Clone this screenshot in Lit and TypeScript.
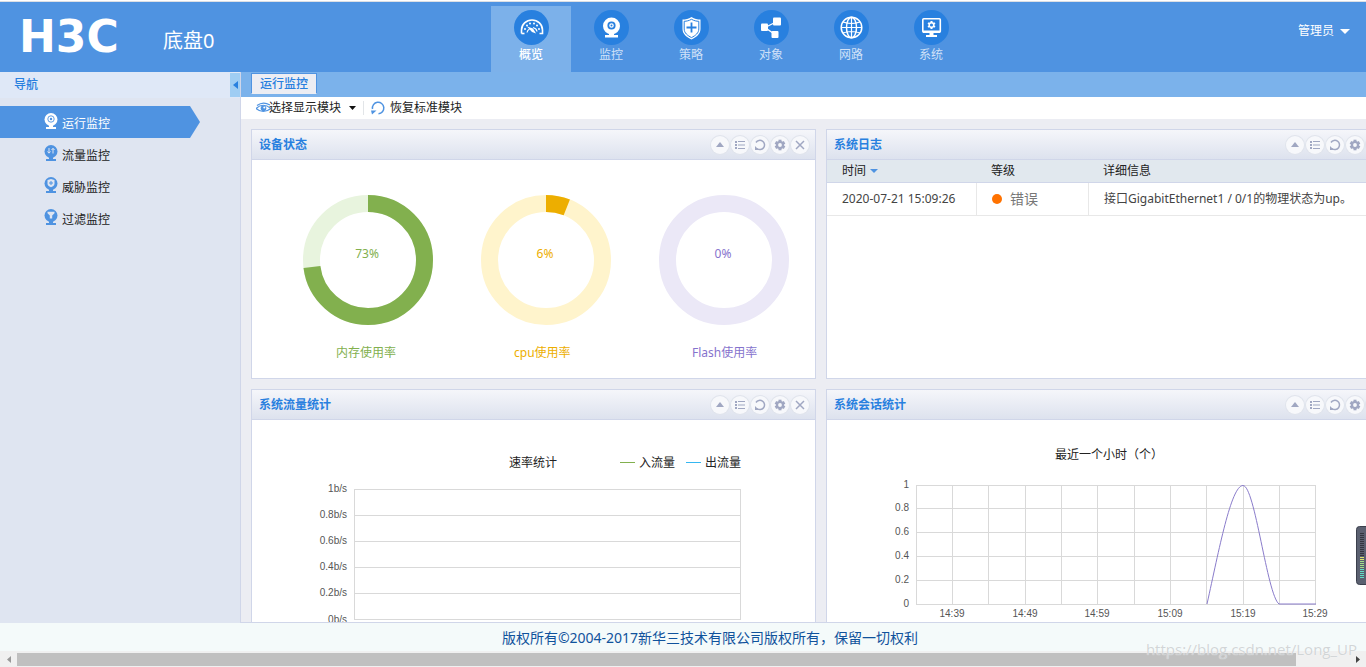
import { LitElement, html, svg, css } from "lit";
import { customElement, property, state } from "lit/decorators.js";
import { classMap } from "lit/directives/class-map.js";

const gearTeeth = (cx: number, cy: number, r: number, w: number, h: number) =>
  [0, 60, 120, 180, 240, 300].map(
    (a) => svg`<rect x=${cx - w / 2} y=${cy - r} width=${w} height=${h} fill="currentColor" transform="rotate(${a} ${cx} ${cy})"/>`
  );

const navIcons: Record<string, unknown> = {
  gauge: svg`<path d="M7.500 23.500V20a10.500 10 0 0 1 21 0v3.500h-3" fill="none" stroke="#fff" stroke-width="1.600"/>
    <path d="M7.500 23.500h3" stroke="#fff" stroke-width="1.600"/>
    <g fill="#fff"><circle cx="11" cy="19" r="1"/><circle cx="13" cy="15.500" r="1"/><circle cx="16" cy="13.500" r="1"/><circle cx="20" cy="13.500" r="1"/><circle cx="23" cy="15.500" r="1"/><circle cx="25" cy="19" r="1"/></g>
    <path d="M13 16.500l6 2 3 5-4-1.500z" fill="#fff"/><path d="M13 22.500a5.500 5 0 0 1 2.500-3.500M19 17.500a5.500 5 0 0 1 4 4" fill="none" stroke="#fff" stroke-width="1.200"/>`,
  camera: svg`<circle cx="17.500" cy="16" r="8.500" fill="#fff"/><circle cx="17.500" cy="15.500" r="3.200" fill="none" stroke="#2880df" stroke-width="1.800"/><circle cx="17.500" cy="15.500" r="1" fill="#2880df"/><path d="M15 23h5v2h4v2.500H11V25h4z" fill="#fff"/>`,
  shield: svg`<path d="M17.500 7c3 2 6 2.500 9 2.500V19c0 5-4 8-9 10.500C12.500 27 8.500 24 8.500 19V9.500c3 0 6-.5 9-2.500z" fill="#fff"/>
    <path d="M17.500 9.300c2.500 1.400 5 2 7.300 2V19c0 4-3.300 6.500-7.300 8.600-4-2.100-7.300-4.600-7.300-8.600v-7.700c2.300 0 4.800-.6 7.300-2z" fill="none" stroke="#2880df"/>
    <path d="M17.500 12.500v10M12.500 17.500h10" stroke="#2880df" stroke-width="1.800"/>`,
  share: svg`<rect x="7" y="13.500" width="7" height="7.500" rx="1" fill="#fff"/><rect x="19" y="7.500" width="8" height="8" rx="1" fill="#fff"/><rect x="17.500" y="21" width="7" height="7" rx="1" fill="#fff"/><path d="M23 11.500L11 17.500l10 7" fill="none" stroke="#fff" stroke-width="1.300"/>`,
  globe: svg`<g fill="none" stroke="#fff" stroke-width="1.500"><circle cx="17.500" cy="17.500" r="10.300"/><ellipse cx="17.500" cy="17.500" rx="5" ry="10.300"/><path d="M7 17.500h21M9 12q8.500 3 17 0M9 23q8.500-3 17 0M17.500 7v21" stroke-width="1.200"/></g>`,
  screen: svg`<rect x="8.800" y="8.800" width="17.500" height="13.500" rx="1" fill="none" stroke="#fff" stroke-width="1.600"/><path d="M9 20.500h17V23H9z" fill="#fff"/><path d="M15.500 23h4v2h-4zM12 25h11v2H12z" fill="#fff"/>
    <g color="#fff">${gearTeeth(17.5, 15, 4, 2, 2)}<circle cx="17.500" cy="15" r="2.300" fill="none" stroke="#fff" stroke-width="1.500"/></g>`,
};

const sideGlyphs: Record<string, (c: string) => unknown> = {
  run: (c) => svg`<circle cx="7" cy="7" r="3.200" fill="none" stroke=${c} stroke-width=".9"/><circle cx="7" cy="7" r="1.200" fill=${c}/>`,
  flow: (c) => svg`<path d="M5 4v5M3.500 7.500L5 9.200l1.500-1.700M9 9.500V4.500M7.500 6L9 4.300 10.500 6" fill="none" stroke=${c}/>`,
  threat: (c) => svg`<path d="M7 3l3.500 1v3.500q0 2.500-3.500 3.800-3.500-1.300-3.500-3.800V4z" fill=${c}/><path d="M7 5v4M5 7h4" stroke="#4f93e1"/>`,
  filter: (c) => svg`<path d="M3.500 3.800h7v1.400L8.200 7.400v3H5.800v-3L3.500 5.200z" fill=${c}/>`,
};

const toolIcons = [
  { label: "折叠", icon: svg`<path d="M5 11l4-5 4 5z" fill="currentColor"/>` },
  { label: "列表", icon: svg`<path d="M4 5h2v2H4zM4 8h2v2H4zM4 11h2v2H4zM7 5h7v1H7zM7 8.500h7v1H7zM7 12h7v1H7z" fill="currentColor"/>` },
  { label: "刷新", icon: svg`<path d="M5 6.500A4.600 4.600 0 1 1 6 12.500" fill="none" stroke="currentColor" stroke-width="1.500"/><path d="M4 10v4h4z" fill="currentColor"/>` },
  { label: "设置", icon: svg`${gearTeeth(9, 9, 5.3, 3, 2.5)}<circle cx="9" cy="9" r="3" fill="none" stroke="currentColor" stroke-width="2.200"/>` },
  { label: "关闭", icon: svg`<path d="M5 5l8 8M13 5l-8 8" stroke="currentColor" stroke-width="1.500"/>` },
];

@customElement("dash-panel")
export class DashPanel extends LitElement {
  @property() heading = "";

  static styles = css`
    :host { display: flex; flex-direction: column; box-sizing: border-box; height: 250px; border: 1px solid #d0d6e9; background: #fff; min-width: 0; }
    .head { display: flex; align-items: center; justify-content: space-between; height: 29px; flex: none; padding: 0 6px 0 7px; border-bottom: 1px solid #d0d6e9; background: linear-gradient(#f5f6fa, #dde2ee); }
    h2 { margin: 0; font-size: 12px; line-height: 18px; font-weight: bold; color: #2880df; }
    .tools { display: flex; gap: 2px; }
    button { display: block; width: 18px; height: 18px; padding: 0; border: 0; border-radius: 50%; background: #f7f8fb; box-shadow: 0 0 0 1px #e0e4ec; color: #a0a7c2; cursor: pointer; }
    svg { display: block; }
    .body { flex: 1; min-height: 0; }
  `;

  render() {
    return html`
      <div class="head">
        <h2>${this.heading}</h2>
        <div class="tools">
          ${toolIcons.map((t) => html`<button type="button" aria-label=${t.label}><svg width="18" height="18" viewBox="0 0 18 18">${t.icon}</svg></button>`)}
        </div>
      </div>
      <div class="body"><slot></slot></div>
    `;
  }
}

@customElement("usage-ring")
export class UsageRing extends LitElement {
  @property({ type: Number }) value = 0;
  @property() label = "";
  @property() color = "";
  @property() track = "";

  static styles = css`
    :host { display: block; width: 130px; }
    svg { display: block; }
    text { font-size: 12px; text-anchor: middle; }
    .label { margin-top: 19px; padding-left: 33px; line-height: 18px; white-space: nowrap; }
  `;

  render() {
    return html`
      <svg width="130" height="130" viewBox="0 0 130 130">
        <circle cx="65" cy="65" r="56.5" fill="none" stroke=${this.track} stroke-width="17" />
        <circle cx="65" cy="65" r="56.5" fill="none" stroke=${this.color} stroke-width="17" pathLength="100" stroke-dasharray="${this.value} 100" transform="rotate(-90 65 65)" />
        <text x="64" y="63" fill=${this.color}>${this.value}%</text>
      </svg>
      <div class="label" style="color:${this.color}">${this.label}</div>
    `;
  }
}

@customElement("app-root")
export class AppRoot extends LitElement {
  @state() private activeNav = 0;
  @state() private activeSide = 0;

  private nav = [
    { icon: "gauge", label: "概览" },
    { icon: "camera", label: "监控" },
    { icon: "shield", label: "策略" },
    { icon: "share", label: "对象" },
    { icon: "globe", label: "网路" },
    { icon: "screen", label: "系统" },
  ];

  private side = [
    { icon: "run", label: "运行监控" },
    { icon: "flow", label: "流量监控" },
    { icon: "threat", label: "威胁监控" },
    { icon: "filter", label: "过滤监控" },
  ];

  static styles = css`
    :host { display: flex; flex-direction: column; position: relative; height: 100vh; overflow: hidden; font: 12px/18px "Noto Sans", "Noto Sans CJK SC", sans-serif; color: #222; background: #fff; }
    * { box-sizing: border-box; }
    button { font: inherit; color: inherit; border: 0; background: none; padding: 0; cursor: pointer; }
    a { color: inherit; text-decoration: none; }
    svg { display: block; flex: none; }
    .viewport { flex: 1; min-height: 0; overflow: hidden; display: grid; grid-template: minmax(0, 1fr) / minmax(1420px, 1fr); }
    .page { min-width: 0; min-height: 0; display: flex; flex-direction: column; border-top: 1px solid #fff; }

    .top { display: flex; height: 71px; flex: none; border-top: 1px solid #dcdfe4; background: #4f93e1; color: #fff; }
    .brand { flex: 0 0 491px; display: flex; align-items: center; gap: 26px; padding-left: 19px; }
    .logo { flex: 0 0 118px; font: bold 44px/44px "DejaVu Sans", sans-serif; }
    .device { font-size: 20px; line-height: 28px; padding-top: 8px; }
    .nav { display: flex; padding-top: 4px; }
    .nav a { width: 80px; display: flex; flex-direction: column; align-items: center; gap: 1px; padding-top: 4px; color: #cfe1f8; }
    .nav a.on { background: #7cb1ea; color: #fff; font-weight: 500; }
    .account { margin: 20px 70px auto auto; display: flex; align-items: center; gap: 6px; }

    .middle { flex: 1; min-height: 0; display: flex; }
    .sidebar { flex: 0 0 241px; background: #dfe5f1; border-right: 1px solid #d0d6e9; }
    .side-head { display: flex; justify-content: space-between; align-items: center; height: 26px; padding-left: 14px; background: #dfe8f7; color: #2880df; }
    h1 { margin: 0; font-size: 12px; line-height: 18px; font-weight: 500; }
    .fold { width: 10px; height: 24px; background: #9fcdf3; display: grid; place-items: center; }
    .side-list { list-style: none; margin: 8px 0 0; padding: 0; }
    .side-list a { display: flex; align-items: center; gap: 4px; width: 200px; height: 32px; padding-left: 44px; }
    .side-list a.on { background: #4f93e1; color: #fff; clip-path: polygon(0 0, 190px 0, 100% 50%, 190px 100%, 0 100%); }
    .side-list svg { margin-bottom: 2px; }
    .side-list span { padding-top: 3px; }

    .main { flex: 1; min-width: 0; display: flex; flex-direction: column; background: #ecedf3; border-bottom: 1px solid #d0d6e9; }
    .tabs { display: flex; height: 25px; flex: none; padding: 1px 10px 3px; background: #7bb2eb; }
    .tab { border: 1px solid #4f93e1; border-bottom-color: #ecedf3; background: #ecedf3; color: #2880df; padding: 0 8px; line-height: 18px; font-weight: 500; }
    .toolbar { display: flex; align-items: center; height: 22px; flex: none; background: #fff; padding-left: 15px; }
    .toolbar button { display: flex; align-items: center; line-height: 14px; }
    .choose { gap: 8px; padding-right: 7px; }
    .choose .cap { display: flex; align-items: center; }
    .choose .cap svg { margin-right: -2px; }
    .restore { gap: 5px; border-left: 1px solid #e2e5e8; padding-left: 7px; }
    .board { flex: 1; min-height: 0; overflow: hidden; display: grid; grid-template-columns: 1fr 1fr; grid-auto-rows: 250px; gap: 10px; padding: 10px 29px 0 10px; }
    .rings { display: flex; gap: 48px; padding: 35px 0 0 51px; }

    table { width: 100%; border-collapse: separate; border-spacing: 0; table-layout: fixed; }
    th, td { text-align: left; font-weight: normal; padding: 0 0 0 15px; white-space: nowrap; }
    th { height: 23px; background: #e1e8ee; border-bottom: 1px solid #d0d6e9; }
    td { height: 33px; border-bottom: 1px solid #e8e8e8; color: #444; }
    td + td { border-left: 1px solid #e8e8e8; }
    .col-time { width: 149px; }
    .col-level { width: 112px; }
    .sort { display: flex; align-items: center; gap: 4px; line-height: 18px; }
    .level { display: flex; align-items: center; gap: 8px; font-size: 14px; color: #777; }
    .dot { width: 10px; height: 10px; border-radius: 50%; background: #ff7200; }

    .chart text { font-size: 12px; fill: #222; }
    .chart .tick { font: 10px "Liberation Sans", sans-serif; fill: #555; }
    .end { text-anchor: end; }
    .mid { text-anchor: middle; }

    .copyright { flex: none; height: 28px; background: #f4fafa; color: #10529c; font-size: 14px; line-height: 30px; text-align: center; }
    .scroll { flex: none; display: flex; align-items: center; height: 16px; background: #f0f0f0; }
    .scroll button { width: 17px; height: 16px; display: grid; place-items: center; }
    .rail { flex: 1; height: 13px; display: flex; }
    .thumb { width: 96%; background: #c0c0c0; }
    .meter { position: absolute; right: 0; top: 526px; width: 10px; height: 59px; }
    .mark { position: absolute; right: 9px; bottom: 7px; font: 15px/22px "Open Sans", sans-serif; color: rgba(195, 200, 202, 0.75); text-shadow: 0 0 1px #fff; }
  `;

  private trafficChart() {
    const rows = ["1b/s", "0.8b/s", "0.6b/s", "0.4b/s", "0.2b/s", "0b/s"];
    return html`<svg class="chart" width="563" height="219" viewBox="0 0 563 219">
      <text x="257" y="47">速率统计</text>
      <path d="M368 42.500h15" stroke="#82b04e" /><text x="387" y="47">入流量</text>
      <path d="M434 42.500h15" stroke="#35b7f1" /><text x="453" y="47">出流量</text>
      <path d="M102.500 69v131M488.500 69v131" stroke="#d9d9d9" />
      ${rows.map((r, i) => svg`<path d="M102 ${69.5 + i * 26}h387" stroke="#d9d9d9"/><text class="tick end" x="95" y=${72 + i * 26 + (i === 5 ? 1 : 0)}>${r}</text>`)}
    </svg>`;
  }

  private sessionChart() {
    const rows = ["1", "0.8", "0.6", "0.4", "0.2", "0"];
    const xs = [89, 125, 161, 198, 234, 270, 307, 343, 379, 416, 452, 488];
    const times = ["14:39", "14:49", "14:59", "15:09", "15:19", "15:29"];
    return html`<svg class="chart" width="563" height="219" viewBox="0 0 563 219">
      <text x="228" y="39">最近一个小时（个）</text>
      ${xs.map((x) => svg`<path d="M${x + 0.5} 65v119" stroke="#d9d9d9"/>`)}
      ${rows.map((r, i) => {
        const y = [65, 88, 112, 136, 160, 184][i];
        return svg`<path d="M89 ${y + 0.5}h400" stroke="#d9d9d9"/><text class="tick end" x="82" y=${y + 3}>${r}</text>`;
      })}
      ${times.map((t, i) => svg`<text class="tick mid" x=${xs[i * 2 + 1]} y="197">${t}</text>`)}
      <path d="M380 184C392 130 404 65.500 416 65.500S440 175 452 184h37" fill="none" stroke="#8a7ccb" />
    </svg>`;
  }

  render() {
    return html`
      <div class="viewport"><div class="page">
        <header class="top">
          <div class="brand"><span class="logo">H3C</span><span class="device">底盘0</span></div>
          <nav class="nav">
            ${this.nav.map((n, i) => html`<a href="#" class=${classMap({ on: i === this.activeNav })} @click=${() => (this.activeNav = i)}>
              <svg width="35" height="35" viewBox="0 0 35 35"><circle cx="17.5" cy="17.5" r="17.5" fill="#2880df" />${navIcons[n.icon]}</svg>
              <span>${n.label}</span></a>`)}
          </nav>
          <button class="account" type="button">管理员<svg width="10" height="5" viewBox="0 0 10 5"><path d="M0 0h10L5 5z" fill="#fff" /></svg></button>
        </header>

        <div class="middle">
          <aside class="sidebar">
            <div class="side-head"><h1>导航</h1>
              <button class="fold" type="button" aria-label="收起"><svg width="5" height="8" viewBox="0 0 5 8"><path d="M5 0v8L0 4z" fill="#2880df" /></svg></button>
            </div>
            <ul class="side-list">
              ${this.side.map((s, i) => {
                const on = i === this.activeSide;
                return html`<li><a href="#" class=${classMap({ on })} @click=${() => (this.activeSide = i)}>
                  <svg width="14" height="18" viewBox="0 0 14 18"><circle cx="7" cy="7.5" r="6.5" fill=${on ? "#fff" : "#4f93e1"} /><path d="M5 13h4v2h3v2H2v-2h3z" fill=${on ? "#fff" : "#4f93e1"} />${sideGlyphs[s.icon](on ? "#4f93e1" : "#dfe5f1")}</svg>
                  <span>${s.label}</span></a></li>`;
              })}
            </ul>
          </aside>

          <main class="main">
            <div class="tabs"><button class="tab" type="button">运行监控</button></div>
            <div class="toolbar">
              <button class="choose" type="button">
                <span class="cap"><svg width="15" height="12" viewBox="0 0 15 12"><path d="M0 6.500q7-6.500 15 0-8 6-15 0M1 3.500q6-4.500 13-.5" fill="none" stroke="#4f93e1" stroke-width="1.200" /><circle cx="7.500" cy="6.300" r="2.800" fill="#4f93e1" /><circle cx="8.300" cy="5.500" r="1" fill="#fff" /></svg>选择显示模块</span>
                <svg width="7" height="4" viewBox="0 0 7 4"><path d="M0 0h7L3.500 4z" fill="#111" /></svg>
              </button>
              <button class="restore" type="button">
                <svg width="14" height="14" viewBox="0 0 14 14"><path d="M1.500 8A5.700 5.700 0 1 1 7.500 12.700" fill="none" stroke="#4f93e1" stroke-width="1.500" /><path d="M0 9.500h5.500L1 13.500z" fill="#4f93e1" /></svg>恢复标准模块
              </button>
            </div>
            <div class="board">
              <dash-panel heading="设备状态">
                <div class="rings">
                  <usage-ring .value=${73} label="内存使用率" color="#82b04e" track="#e8f4de"></usage-ring>
                  <usage-ring .value=${6} label="cpu使用率" color="#edae00" track="#fff4cc"></usage-ring>
                  <usage-ring .value=${0} label="Flash使用率" color="#8673cd" track="#ebe8f7"></usage-ring>
                </div>
              </dash-panel>
              <dash-panel heading="系统日志">
                <table>
                  <thead><tr>
                    <th class="col-time"><span class="sort">时间<svg width="8" height="4" viewBox="0 0 8 4"><path d="M0 0h8L4 4z" fill="#4f93e1" /></svg></span></th>
                    <th class="col-level">等级</th><th>详细信息</th>
                  </tr></thead>
                  <tbody><tr>
                    <td>2020-07-21 15:09:26</td>
                    <td><span class="level"><span class="dot"></span>错误</span></td>
                    <td>接口GigabitEthernet1 / 0/1的物理状态为up。</td>
                  </tr></tbody>
                </table>
              </dash-panel>
              <dash-panel heading="系统流量统计">${this.trafficChart()}</dash-panel>
              <dash-panel heading="系统会话统计">${this.sessionChart()}</dash-panel>
            </div>
          </main>
        </div>
        <footer class="copyright">版权所有©2004-2017新华三技术有限公司版权所有，保留一切权利</footer>
      </div></div>

      <div class="scroll">
        <button type="button" aria-label="向左滚动"><svg width="4" height="7" viewBox="0 0 4 7"><path d="M4 0v7L0 3.500z" fill="#999" /></svg></button>
        <div class="rail"><div class="thumb"></div></div>
        <button type="button" aria-label="向右滚动"><svg width="4" height="7" viewBox="0 0 4 7"><path d="M0 0v7l4-3.500z" fill="#444" /></svg></button>
      </div>
      <div class="meter"><svg width="10" height="59" viewBox="0 0 10 59">
        <path d="M11 .5H3.500q-3 0-3 3v52q0 3 3 3H11" fill="#5b6070" stroke="#3b3f4c" />
        ${Array.from({ length: 23 }, (_, i) => svg`<path d="M4 ${7.5 + i * 2}h4" stroke=${i < 12 ? "#33363f" : i < 14 ? "#dbe56d" : i < 18 ? "#9fe08a" : "#63dcc4"}/>`)}
      </svg></div>
      <div class="mark">https://blog.csdn.net/Long_UP</div>
    `;
  }
}
